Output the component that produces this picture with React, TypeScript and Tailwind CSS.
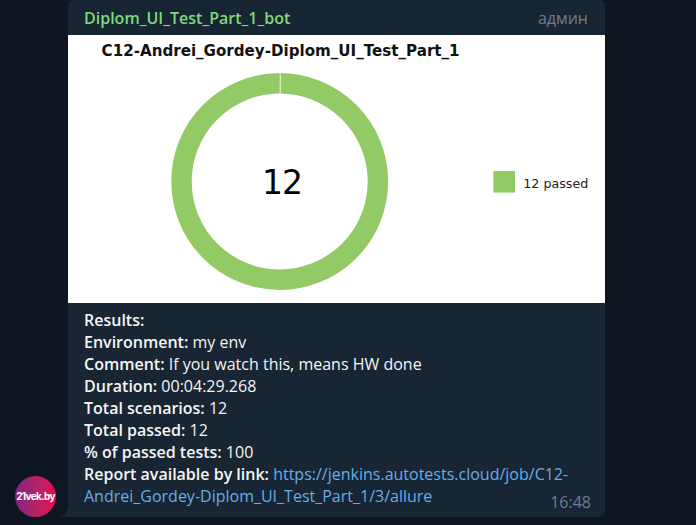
const results = [
  { label: "Environment:", value: "my env" },
  { label: "Comment:", value: "If you watch this, means HW done" },
  { label: "Duration:", value: "00:04:29.268" },
  { label: "Total scenarios:", value: "12" },
  { label: "Total passed:", value: "12" },
  { label: "% of passed tests:", value: "100" },
];

function ResultsChart() {
  return (
    <svg className="block h-[268px] w-[537px] bg-white font-['DejaVu_Sans',sans-serif]" viewBox="0 0 537 268">
      <text x="33.6" y="20.7" fontSize="15" fontWeight="700" fill="#111" textLength="358" lengthAdjust="spacingAndGlyphs">
        C12-Andrei_Gordey-Diplom_UI_Test_Part_1
      </text>
      <circle cx="211.7" cy="146.5" r="98.2" fill="none" stroke="#92ca66" strokeWidth="20.4" />
      <path d="M212.2 37V60" stroke="#f1f8ec" strokeWidth="1" />
      <text x="194" y="159" fontSize="33" fill="#000" textLength="41">12</text>
      <rect x="425.4" y="136" width="21.6" height="21.6" fill="#92ca66" />
      <text x="455.3" y="152.7" fontSize="12" fill="#222" textLength="65" lengthAdjust="spacingAndGlyphs">12 passed</text>
    </svg>
  );
}

function Avatar() {
  return (
    <div className="flex size-[41px] shrink-0 items-center justify-center rounded-full bg-linear-to-r from-[#81207f] to-[#e6004b]">
      <span className="pb-px font-['Inter',sans-serif] text-[10px] font-bold leading-none tracking-[-0.65px] text-white">21vek.by</span>
    </div>
  );
}

export default function App() {
  return (
    <div className="flex h-[525px] w-[696px] items-end overflow-hidden bg-[#0e1621] pb-2 pl-[15px] font-['Open_Sans',sans-serif] text-base">
      <Avatar />
      <svg className="ml-[5px] h-3 w-[7px] shrink-0" viewBox="0 0 7 12">
        <path d="M7 0C7 5 5 9 0.5 11.2Q0 12 1 12H7Z" fill="#182533" />
      </svg>
      <article className="h-[517px] w-[537px] rounded-t-md rounded-br-md bg-[#182533]">
        <header className="flex h-[35px] items-center justify-between pl-4 pr-[17px]">
          <span className="font-semibold text-[#7bdb7e]">Diplom_UI_Test_Part_1_bot</span>
          <span className="text-[#6d7f8f]">админ</span>
        </header>
        <ResultsChart />
        <div className="flex items-end justify-between pl-4 pr-3.5 pt-1.5 leading-[22px] text-[#f5f5f5]">
          <div>
            <p className="font-semibold">Results:</p>
            {results.map(({ label, value }) => (
              <p key={label}>
                <span className="font-semibold">{label}</span> {value}
              </p>
            ))}
            <p className="whitespace-nowrap">
              <span className="font-semibold">Report available by link:</span>{" "}
              <a className="text-[#64aeea]">
                https://jenkins.autotests.cloud/job/C12-
                <br />
                Andrei_Gordey-Diplom_UI_Test_Part_1/3/allure
              </a>
            </p>
          </div>
          <time className="-mb-1.5 -ml-10 text-[#6d7f8f]">16:48</time>
        </div>
      </article>
    </div>
  );
}
